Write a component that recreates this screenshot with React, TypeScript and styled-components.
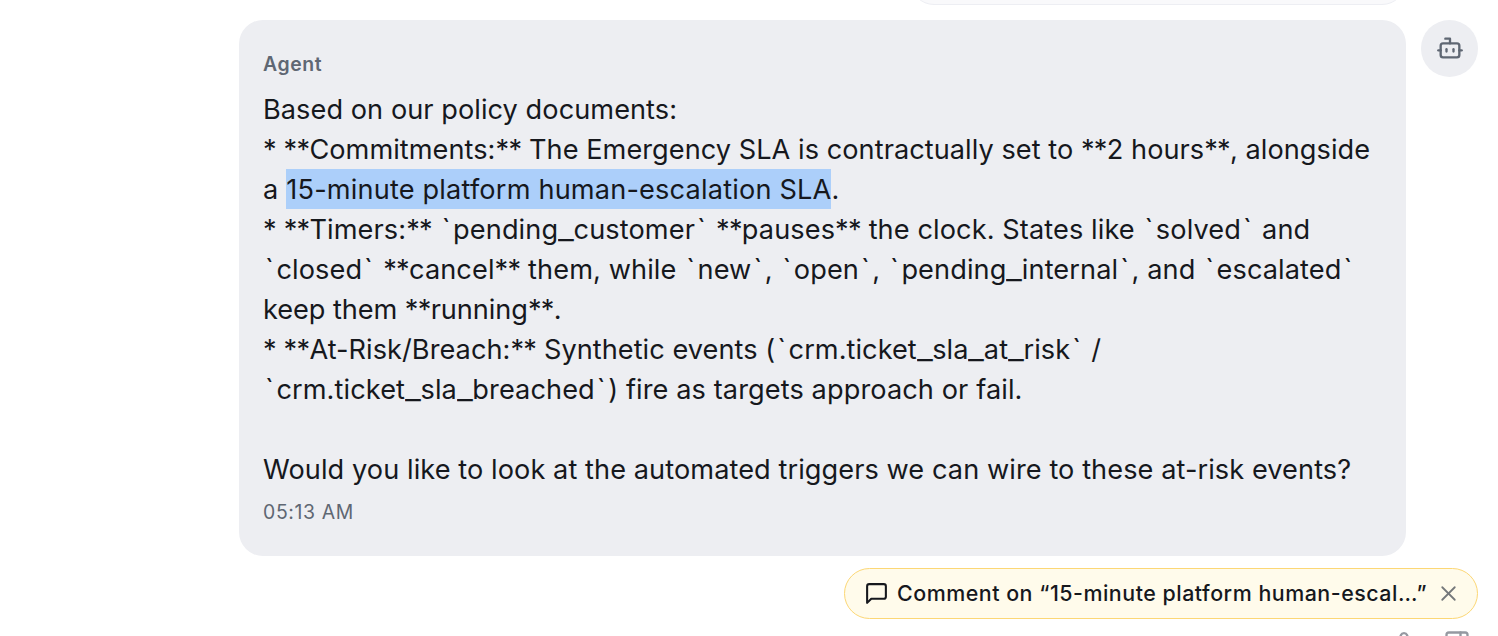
import { Bot, X, PanelRight } from 'lucide-react'
import styled, { createGlobalStyle } from 'styled-components'

const GlobalStyle = createGlobalStyle`
  * {
    box-sizing: border-box;
  }

  body {
    margin: 0;

    overflow: hidden;

    font-family: Inter, 'Liberation Sans', sans-serif;

    background: #ffffff;
  }
`

const Container = styled.div`
  display: flex;

  flex-direction: column;

  height: 636px;
  width: 1498px;

  overflow: hidden;
`

const PreviousBubble = styled.div`
  align-self: flex-end;
  flex-shrink: 0;

  margin-top: -60px;
  margin-right: 92px;

  border: 1px solid #edeef3;
  border-radius: 24px;

  height: 64.5px;
  width: 496px;

  background: #f9f9fb;
`

const MessageRow = styled.div`
  display: flex;

  gap: 15px;

  margin: 15.5px 20px 0 239px;
`

const Bubble = styled.article`
  border-radius: 24px;

  padding: 31px 24px 0;

  height: 535.5px;
  width: 1167px;

  background: #edeef2;
`

const Sender = styled.div`
  font-size: 19.4px;
  font-weight: 600;
  line-height: 26px;
  letter-spacing: 0.65px;

  color: #5f6773;
`

const Message = styled.div`
  margin-top: 13px;

  font-size: 27.15px;
  line-height: 40px;

  white-space: pre;

  color: #16181d;
`

const Line = styled.div<{ $spacing?: number }>`
  height: 40px;

  letter-spacing: ${(props) => props.$spacing ?? 0.1}px;
`

const Star = styled.span`
  letter-spacing: -0.7px;
`

const Tick = styled.span`
  margin-left: 2px;

  letter-spacing: 2.6px;
`

const Underscore = styled.span`
  display: inline-block;

  margin-right: 3px;

  letter-spacing: 0;

  transform: scaleX(1.28);
  transform-origin: left;
`

const Highlight = styled.mark`
  padding: 4px 0 3px;

  color: inherit;

  background: #accffa;
`

const Time = styled.time`
  display: block;

  margin-top: 9px;

  font-size: 19.4px;
  line-height: 26px;
  letter-spacing: 0.65px;

  color: #5f6773;
`

const Avatar = styled.div`
  display: flex;

  justify-content: center;
  align-items: center;

  border-radius: 50%;

  height: 56.5px;
  width: 57px;

  color: #5f6773;

  background: #edeef2;
`

const CommentChip = styled.div`
  display: flex;

  align-self: flex-end;
  align-items: center;
  flex-shrink: 0;

  margin: 12.5px 20px 0 0;

  border: 1px solid #fcd775;
  border-radius: 26px;

  padding: 0 16px 0 19px;

  height: 51px;
  width: 634px;

  color: #16181d;

  background: #fffbeb;
`

const CommentText = styled.span`
  margin-left: 8px;

  padding-bottom: 2px;

  font-size: 21.4px;
  font-weight: 500;
  letter-spacing: 0.52px;

  white-space: nowrap;
`

const CloseButton = styled.button`
  display: flex;

  margin-left: auto;

  border: 0;

  padding: 0;

  color: #74777a;

  background: none;
`

const Toolbar = styled.div`
  display: flex;

  align-self: flex-end;

  gap: 25px;

  margin: 10px 27px 0 0;

  color: #9599a1;
`

const lines = [
  { text: 'Based on our policy documents:', spacing: 0.06 },
  {
    text: '* **Commitments:** The Emergency SLA is contractually set to **2 hours**, alongside',
    spacing: 0.05,
  },
  { text: 'a ', selected: '15-minute platform human-escalation SLA', rest: '.', spacing: 0.18 },
  { text: '* **Timers:** `pending_customer` **pauses** the clock. States like `solved` and' },
  { text: '`closed` **cancel** them, while `new`, `open`, `pending_internal`, and `escalated`' },
  { text: 'keep them **running**.', spacing: -0.05 },
  { text: '* **At-Risk/Breach:** Synthetic events (`crm.ticket_sla_at_risk` /', spacing: 0.05 },
  { text: '`crm.ticket_sla_breached`) fire as targets approach or fail.' },
  { text: '' },
  {
    text: 'Would you like to look at the automated triggers we can wire to these at-risk events?',
    spacing: 0.08,
  },
]

const renderText = (text: string) =>
  text.split(/(\*+|`|_)/).map((part, index) => {
    if (part.startsWith('*')) return <Star key={index}>{part}</Star>
    if (part === '`') return <Tick key={index}>{part}</Tick>
    if (part === '_') return <Underscore key={index}>{part}</Underscore>
    return part
  })

const CommentIcon = () => (
  <svg
    width="25"
    height="25"
    viewBox="0 0 24 24"
    fill="none"
    stroke="currentColor"
    strokeWidth="2"
    strokeLinecap="round"
    strokeLinejoin="round"
  >
    <path d="M21 15a2 2 0 0 1-2 2H7l-4 4V5a2 2 0 0 1 2-2h14a2 2 0 0 1 2 2z" />
  </svg>
)

const BellIcon = () => (
  <svg
    width="28"
    height="28"
    viewBox="0 0 28 28"
    fill="none"
    stroke="currentColor"
    strokeWidth="2.3"
    strokeLinecap="round"
    strokeLinejoin="round"
  >
    <path d="M4 21c3-3 4-6 5-10l2-5c1-2.5 5-2.5 6 0l2 5c1 4 2 7 5 10z" />
  </svg>
)

export const App = () => {
  return (
    <>
      <GlobalStyle />
      <Container>
        <PreviousBubble />
        <MessageRow>
          <Bubble>
            <Sender>Agent</Sender>
            <Message>
              {lines.map(({ text, selected, rest, spacing }, index) => (
                <Line key={index} $spacing={spacing}>
                  {renderText(text)}
                  {selected && <Highlight>{selected}</Highlight>}
                  {rest}
                </Line>
              ))}
            </Message>
            <Time>05:13 AM</Time>
          </Bubble>
          <Avatar>
            <Bot size={28} strokeWidth={2} />
          </Avatar>
        </MessageRow>
        <CommentChip>
          <CommentIcon />
          <CommentText>Comment on “15-minute platform human-escal…”</CommentText>
          <CloseButton aria-label="Close">
            <X size={25} strokeWidth={1.75} />
          </CloseButton>
        </CommentChip>
        <Toolbar>
          <BellIcon />
          <PanelRight size={28} />
        </Toolbar>
      </Container>
    </>
  )
}

export default App
